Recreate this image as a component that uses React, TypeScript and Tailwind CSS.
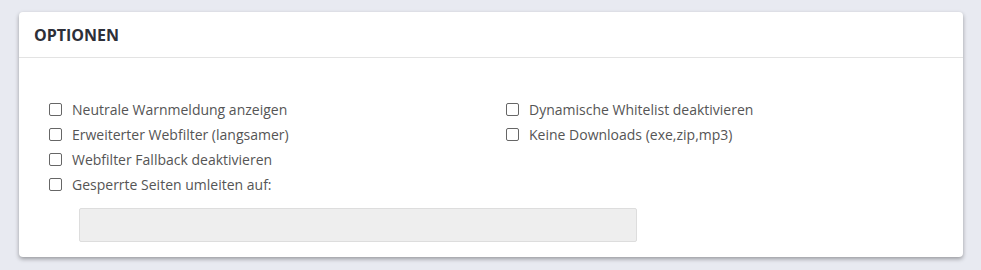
const left = [
  "Neutrale Warnmeldung anzeigen",
  "Erweiterter Webfilter (langsamer)",
  "Webfilter Fallback deaktivieren",
  "Gesperrte Seiten umleiten auf:",
];

const right = [
  "Dynamische Whitelist deaktivieren",
  "Keine Downloads (exe,zip,mp3)",
];

function Option({ label }: { label: string }) {
  return (
    <label className="flex h-[25px] items-center gap-[10px] text-[14px] text-[#555]">
      <span className="h-[13px] w-[13px] shrink-0 rounded-[2px] border border-[#666] bg-white" />
      <span>{label}</span>
    </label>
  );
}

export default function App() {
  return (
    <div
      className="min-h-[270px] bg-[#e8eaf1] pl-[19px] pr-[18px] pt-[12px]"
      style={{ fontFamily: '"Open Sans", "Liberation Sans", sans-serif' }}
    >
      <div className="rounded-[4px] bg-white shadow-[0_2px_4px_rgba(0,0,0,0.35)]">
        {/* Header */}
        <div className="flex h-[46px] items-center border-b border-[#e3e3e3] px-[15px]">
          <h2 className="text-[16px] font-bold text-[#2d2f38]">OPTIONEN</h2>
        </div>

        {/* Body */}
        <div className="grid grid-cols-2 px-[15px] pb-[15px] pt-[39px]">
          <div className="px-[15px]">
            {left.map((l) => (
              <Option key={l} label={l} />
            ))}
            <div className="pl-[30px] pt-[11px]">
              <div className="h-[34px] w-[558px] rounded-[2px] border border-[#dddddd] bg-[#eeeeee]" />
            </div>
          </div>
          <div className="px-[15px]">
            {right.map((l) => (
              <Option key={l} label={l} />
            ))}
          </div>
        </div>
      </div>
    </div>
  );
}
